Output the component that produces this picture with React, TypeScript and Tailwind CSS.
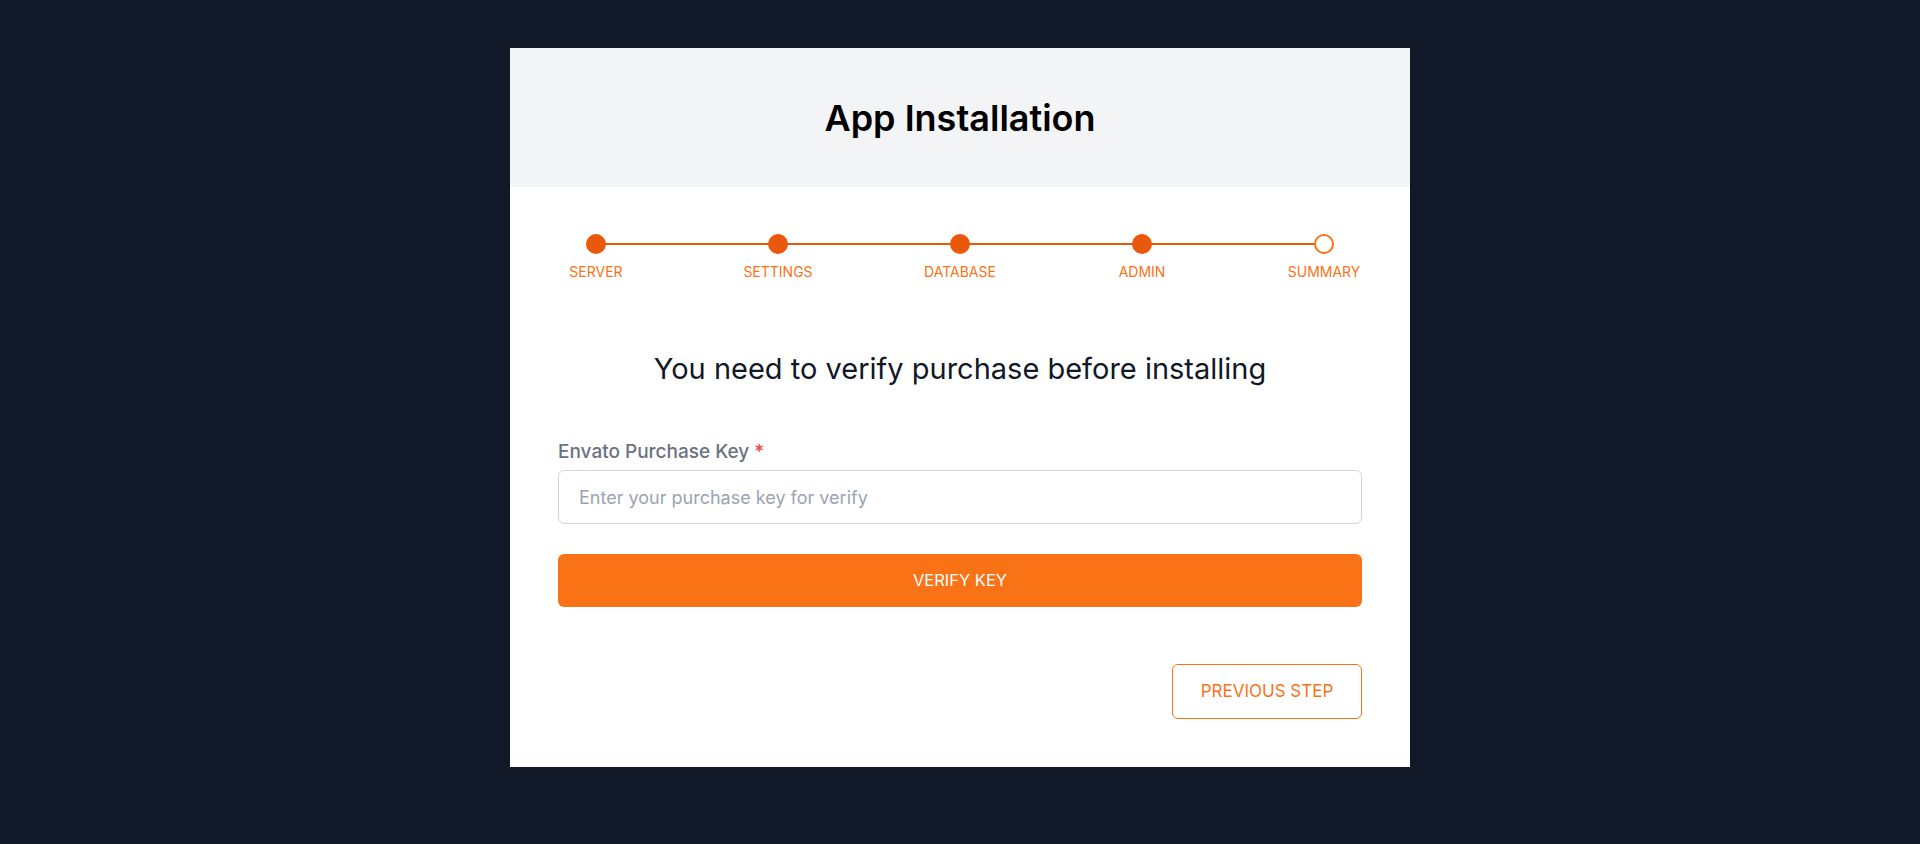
import React from 'react';

const STEPS = ['SERVER', 'SETTINGS', 'DATABASE', 'ADMIN', 'SUMMARY'];
const CURRENT = 4;

const App: React.FC = () => {
  return (
    <div className="min-h-screen bg-[#111827] pt-12 pb-12" style={{ fontFamily: 'Inter, "Noto Sans", sans-serif' }}>
      <div className="mx-auto w-[900px] bg-white">
        <div className="h-[139px] bg-[#f3f4f6] flex items-center justify-center">
          <h1 className="text-4xl font-semibold text-black leading-none">App Installation</h1>
        </div>

        <div className="px-12 pt-[47px] pb-12">
          {/* Шаги */}
          <div className="relative flex justify-between">
            <div className="absolute left-[38px] right-[38px] top-[9px] h-[2px] bg-[#ea580c]"></div>
            {STEPS.map((step, idx) => (
              <div key={step} className="relative w-[76px] flex flex-col items-center">
                {idx < CURRENT ? (
                  <div className="w-5 h-5 rounded-full bg-[#ea580c]"></div>
                ) : (
                  <div className="w-5 h-5 rounded-full bg-white border-2 border-[#f97316]"></div>
                )}
                <span className="mt-2 text-sm leading-5 text-[#f97316] whitespace-nowrap">{step}</span>
              </div>
            ))}
          </div>

          <h2 className="mt-[69px] text-center text-[29px] leading-9 text-[#111827]">
            You need to verify purchase before installing
          </h2>

          <label className="block mt-[53px] mb-1.5 text-[19px] leading-6 font-medium text-[#6b7280]">
            Envato Purchase Key <span className="text-[#ef4444]">*</span>
          </label>
          <input
            type="text"
            placeholder="Enter your purchase key for verify"
            className="w-full h-[54px] px-5 rounded-md border border-[#d1d5db] text-lg text-gray-900 placeholder:text-[#9ca3af] outline-none"
          />

          <button className="mt-[30px] w-full h-[53px] rounded-md bg-[#f97316] text-white text-[16.5px]">
            VERIFY KEY
          </button>

          <div className="mt-[57px] flex justify-end">
            <button className="w-[190px] h-[55px] rounded-md border border-[#f97316] text-[#f97316] text-[17px] bg-white">
              PREVIOUS STEP
            </button>
          </div>
        </div>
      </div>
    </div>
  );
};

export default App;
